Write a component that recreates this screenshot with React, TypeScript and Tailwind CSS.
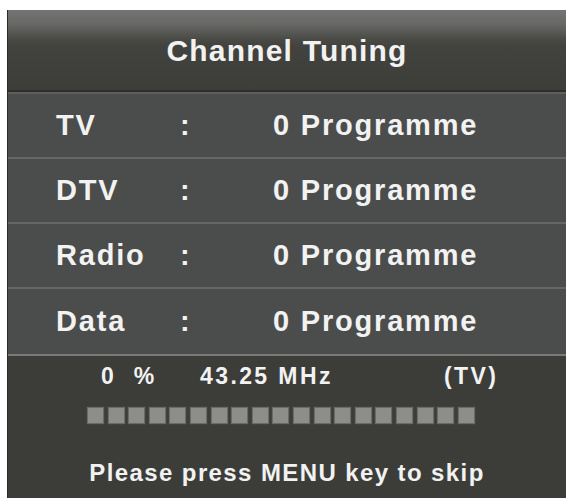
import React from "react";

const font = { fontFamily: '"Liberation Sans", Arial, sans-serif' };

function Row({ label, last }: { label: string; last?: boolean }) {
  return (
    <div
      className={`flex items-center h-[65px] bg-[#4b4d4c] text-[29px] font-bold tracking-[1.8px] text-[#f2f2f2] ${
        last ? "" : "border-b-2 border-[#656765]"
      }`}
    >
      <div className="w-[124px] pl-[48px]">{label}</div>
      <div className="w-[141px] pl-[48px]">:</div>
      <div>0 Programme</div>
    </div>
  );
}

export default function App() {
  const squares = Array.from({ length: 19 });
  return (
    <div className="w-[568px] h-[498px] bg-white overflow-hidden" style={font}>
      <div className="ml-[7px] mt-[10px] w-[559px] h-[488px] flex flex-col bg-[#3c3d39] border-l border-[#2a2a28]">
        <div className="h-[82px] flex items-center justify-center bg-[linear-gradient(180deg,#747472_0%,#676765_18%,#58585380_36%,#42423e_45%,#3d3d39_100%)] bg-[#3d3d39] border-b-2 border-[#2e2e2b] text-[30px] font-bold tracking-[1.2px] text-[#f2f2f2]">
          Channel Tuning
        </div>
        <div className="border-t-2 border-[#5f605d]">
          <Row label="TV" />
          <Row label="DTV" />
          <Row label="Radio" />
          <Row label="Data" last />
        </div>
        <div className="flex-1 border-t-2 border-[#7a7b78] bg-[#3c3d39] text-[#f2f2f2] font-bold">
          <div className="flex items-center h-[40px] text-[23px] tracking-[2.4px]">
            <div className="w-[192px] pl-[93px]">0&nbsp;&nbsp;%</div>
            <div className="w-[244px]">43.25 MHz</div>
            <div>(TV)</div>
          </div>
          <div className="flex gap-[5.6px] pl-[80px] mt-[12px]">
            {squares.map((_, i) => (
              <div key={i} className="w-[15px] h-[15px] bg-[#8d8e8b] shadow-[0_0_1px_1px_#6a6b68]" />
            ))}
          </div>
          <div className="text-center text-[24px] tracking-[1.4px] mt-[32px]">
            Please press MENU key to skip
          </div>
        </div>
      </div>
    </div>
  );
}
